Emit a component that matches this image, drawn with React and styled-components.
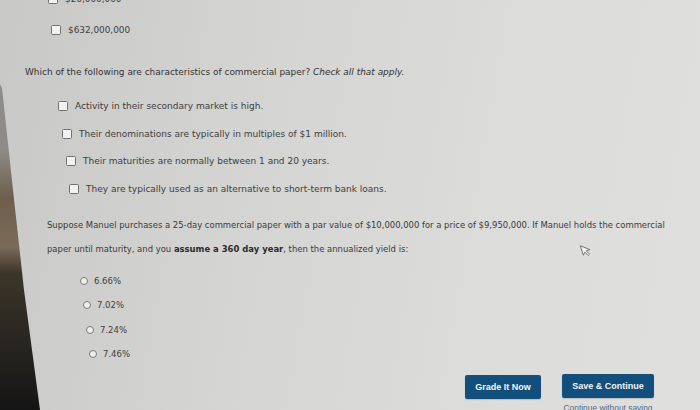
import React from "react";
import styled, { createGlobalStyle } from "styled-components";

const Global = createGlobalStyle`
  html, body { margin: 0; padding: 0; }
  body { background: #d6d6d4; }
`;

const Screen = styled.div`
  position: relative;
  width: 700px;
  height: 410px;
  overflow: hidden;
  background: linear-gradient(100deg, #c8c8c6 0%, #d4d4d2 35%, #dcdcda 70%, #dfdfdd 100%);
  font-family: "DejaVu Sans", Verdana, sans-serif;
  color: #3b3b3b;
  display: flex;
  flex-direction: column;
`;

const List = styled.div`
  display: flex;
  flex-direction: column;
  gap: ${(p) => p.$gap}px;
  margin-top: ${(p) => p.$top}px;
`;

const Row = styled.label`
  display: flex;
  align-items: center;
  gap: ${(p) => p.$gap || 6}px;
  height: 14px;
  padding-left: ${(p) => p.$indent}px;
  font-size: ${(p) => p.$size || 9}px;
  color: #404040;
  white-space: nowrap;
`;

const Box = styled.span`
  width: 8px;
  height: 8px;
  border: 1px solid #707070;
  border-radius: 1.5px;
  background: #f2f2f0;
  flex: none;
`;

const Radio = styled.span`
  width: 6px;
  height: 6px;
  border: 1px solid #7a7a7a;
  border-radius: 50%;
  background: #efefed;
  flex: none;
`;

const Question = styled.p`
  margin: 29px 0 0 25px;
  height: 12px;
  line-height: 12px;
  font-size: 8.95px;
  color: #333;
  white-space: nowrap;
  em { font-style: italic; }
`;

const Paragraph = styled.p`
  margin: 17px 0 0 47px;
  font-size: 8.45px;
  line-height: 24px;
  color: #3a3a3a;
  white-space: nowrap;
  b { font-weight: bold; color: #2b2b2b; }
`;

const Actions = styled.div`
  display: flex;
  justify-content: flex-end;
  align-items: flex-start;
  gap: 21px;
  padding-right: 46px;
  margin-top: 13px;
`;

const ButtonColumn = styled.div`
  display: flex;
  flex-direction: column;
  align-items: center;
  margin-top: ${(p) => p.$top || 0}px;
`;

const Button = styled.button`
  width: ${(p) => p.$w}px;
  height: 24px;
  border: none;
  border-radius: 2px;
  background: #124f7c;
  color: #f4f6f8;
  font-family: "Liberation Sans", Arial, sans-serif;
  font-weight: bold;
  font-size: 9px;
  padding: 0;
  box-shadow: 0 1px 1px rgba(0, 0, 0, 0.15);
`;

const LinkText = styled.span`
  margin-top: 5px;
  font-family: "Liberation Sans", Arial, sans-serif;
  font-size: 8.4px;
  color: #4f6a85;
  white-space: nowrap;
`;

const Bezel = styled.svg`
  position: absolute;
  left: 0;
  top: 0;
  pointer-events: none;
`;

const Cursor = styled.svg`
  position: absolute;
  left: 581px;
  top: 243px;
  transform: rotate(-18deg);
`;

const topChoices = [
  { text: "$26,000,000", indent: 48 },
  { text: "$632,000,000", indent: 51 },
];

const checks = [
  { text: "Activity in their secondary market is high.", indent: 58 },
  { text: "Their denominations are typically in multiples of $1 million.", indent: 62 },
  { text: "Their maturities are normally between 1 and 20 years.", indent: 66 },
  { text: "They are typically used as an alternative to short-term bank loans.", indent: 69 },
];

const radios = [
  { text: "6.66%", indent: 80 },
  { text: "7.02%", indent: 83 },
  { text: "7.24%", indent: 86 },
  { text: "7.46%", indent: 89 },
];

export default function App() {
  return (
    <>
      <Global />
      <Screen>
        <List $top={-8} $gap={17}>
          {topChoices.map((c) => (
            <Row key={c.text} $indent={c.indent} $gap={7} $size={8.9}>
              <Box />
              {c.text}
            </Row>
          ))}
        </List>

        <Question>
          Which of the following are characteristics of commercial paper? <em>Check all that apply.</em>
        </Question>

        <List $top={21} $gap={13.7}>
          {checks.map((c) => (
            <Row key={c.text} $indent={c.indent} $gap={7} $size={9}>
              <Box />
              {c.text}
            </Row>
          ))}
        </List>

        <Paragraph>
          Suppose Manuel purchases a 25-day commercial paper with a par value of $10,000,000 for a price of $9,950,000. If Manuel holds the commercial
          <br />
          paper until maturity, and you <b>assume a 360 day year</b>, then the annualized yield is:
        </Paragraph>

        <List $top={13} $gap={10.3}>
          {radios.map((r) => (
            <Row key={r.text} $indent={r.indent} $gap={6} $size={8.5}>
              <Radio />
              {r.text}
            </Row>
          ))}
        </List>

        <Actions>
          <ButtonColumn $top={1}>
            <Button $w={76}>Grade It Now</Button>
          </ButtonColumn>
          <ButtonColumn>
            <Button $w={92}>Save &amp; Continue</Button>
            <LinkText>Continue without saving</LinkText>
          </ButtonColumn>
        </Actions>

        <Cursor width="10" height="14" viewBox="0 0 12 16">
          <path d="M1 1 L1 13 L4 10 L6.5 15 L8.5 14 L6 9 L10.5 9 Z" fill="#f3f3f1" stroke="#6a6a6a" strokeWidth="1" strokeLinejoin="round" />
        </Cursor>

        <Bezel width="46" height="410" viewBox="0 0 46 410">
          <defs>
            <linearGradient id="bz" x1="0" y1="0" x2="0" y2="1">
              <stop offset="0.2" stopColor="#8d8c88" />
              <stop offset="0.35" stopColor="#6e5e4c" />
              <stop offset="0.5" stopColor="#7a6a58" />
              <stop offset="0.58" stopColor="#3c3529" />
              <stop offset="0.8" stopColor="#272520" />
              <stop offset="1" stopColor="#151515" />
            </linearGradient>
          </defs>
          <polygon points="0,84 2,88 13,190 24,290 40,410 0,410" fill="url(#bz)" />
        </Bezel>
      </Screen>
    </>
  );
}
